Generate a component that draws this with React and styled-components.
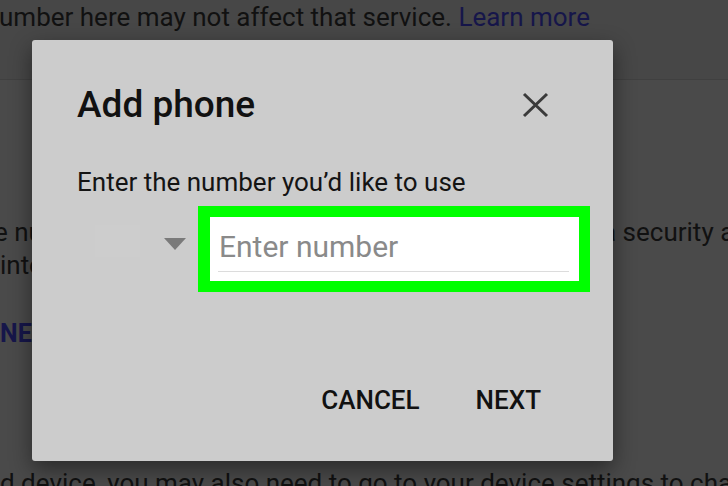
import React from 'react'
import styled, { createGlobalStyle } from 'styled-components'

const GlobalStyle = createGlobalStyle`
  html, body {
    margin: 0;
    padding: 0;
    background: #4a4a4a;
    overflow: hidden;
  }
  body {
    font-family: Roboto, "Liberation Sans", sans-serif;
  }
`;

const Screen = styled.div`
  position: relative;
  width: 728px;
  height: 486px;
  overflow: hidden;
  background: #4a4a4a;
  color: #111;
`;

const TopBand = styled.div`
  height: 80px;
  padding-top: 1px;
  box-sizing: border-box;
  background: #474747;
  border-bottom: 1px solid #404040;
`;

const Line = styled.div`
  font-size: 26px;
  line-height: 33px;
  white-space: nowrap;
  margin-left: ${p => p.$indent || 0}px;
  margin-top: ${p => p.$top || 0}px;
`;

const Link = styled.span`
  color: #16164a;
`;

const BoldLink = styled.div`
  font-size: 25px;
  line-height: 33px;
  font-weight: 700;
  color: #16164a;
  margin-top: 35px;
`;

const Section = styled.div`
  padding-top: 136px;
`;

const SplitLine = styled.div`
  display: grid;
  grid-template-columns: 602px max-content;
  font-size: 26px;
  line-height: 33px;
  white-space: nowrap;
`;

const LeftCell = styled.span`
  overflow: hidden;
  text-indent: -6px;
`;

const RightCell = styled.span``;

const Dialog = styled.div`
  position: absolute;
  left: 32px;
  top: 40px;
  width: 581px;
  height: 421px;
  box-sizing: border-box;
  padding: 45px 0 43px 45px;
  background: #cccccc;
  border-radius: 3px;
  box-shadow: 0 8px 22px rgba(0, 0, 0, 0.45);
  display: flex;
  flex-direction: column;
`;

const Header = styled.div`
  display: flex;
  align-items: center;
  justify-content: space-between;
  padding-right: 64px;
`;

const Title = styled.h2`
  margin: 0;
  font-size: 37px;
  line-height: 40px;
  font-weight: 500;
  color: #111;
`;

const CloseButton = styled.button`
  display: flex;
  padding: 0;
  border: none;
  background: none;
  cursor: pointer;
`;

const Prompt = styled.p`
  margin: 42px 0 0;
  font-size: 26px;
  line-height: 30px;
  color: #141414;
`;

const InputRow = styled.div`
  display: flex;
  margin-top: 9px;
`;

const CountryPicker = styled.div`
  width: 121px;
  display: flex;
  align-items: flex-start;
`;

const CountryFlag = styled.div`
  margin: 19px 0 0 18px;
  width: 45px;
  height: 32px;
  background: #cdcdcd;
`;

const Caret = styled.svg`
  margin: 32px 0 0 24px;
`;

const Highlight = styled.div`
  width: 392px;
  box-sizing: border-box;
  border: solid #00ff00;
  border-width: 11px 11px 11px 12px;
  background: #ffffff;
  height: 86px;
`;

const NumberInput = styled.input`
  display: block;
  box-sizing: border-box;
  width: calc(100% - 18px);
  height: 55px;
  margin: 0 10px 0 8px;
  padding: 5px 1px 0;
  border: none;
  border-bottom: 1px solid #dcdcdc;
  outline: none;
  background: transparent;
  font-family: Roboto, "Liberation Sans", sans-serif;
  font-size: 30px;
  color: #222;

  &::placeholder {
    color: #8a8a8a;
  }
`;

const Actions = styled.div`
  margin-top: auto;
  display: flex;
  justify-content: flex-end;
  gap: 32px;
  padding-right: 60px;
`;

const TextButton = styled.button`
  border: none;
  background: none;
  padding: 0 12px;
  font-family: Roboto, "Liberation Sans", sans-serif;
  font-size: 26px;
  line-height: 36px;
  font-weight: 500;
  color: #111;
  cursor: pointer;
`;

function CloseIcon() {
  return (
    <svg width="27" height="26" viewBox="0 0 27 26">
      <path d="M2 2 L25 24 M25 2 L2 24" stroke="#3a3a3a" strokeWidth="3" fill="none" />
    </svg>
  )
}

export default function App() {
  return (
    <>
      <GlobalStyle />
      <Screen>
        <TopBand>
          <Line $indent={-1}>
            umber here may not affect that service. <Link>Learn more</Link>
          </Line>
        </TopBand>
        <Section>
          <SplitLine>
            <LeftCell>e number you add here can be used as</LeftCell>
            <RightCell>a security a</RightCell>
          </SplitLine>
          <Line>into your account and to send codes</Line>
          <BoldLink>NEXT</BoldLink>
          <Line $top={117}>d device, you may also need to go to your device settings to cha</Line>
        </Section>

        <Dialog>
          <Header>
            <Title>Add phone</Title>
            <CloseButton aria-label="Close">
              <CloseIcon />
            </CloseButton>
          </Header>
          <Prompt>Enter the number you’d like to use</Prompt>
          <InputRow>
            <CountryPicker>
              <CountryFlag />
              <Caret width="22" height="12" viewBox="0 0 22 12">
                <polygon points="0,0 22,0 11,12" fill="#7a7a7a" />
              </Caret>
            </CountryPicker>
            <Highlight>
              <NumberInput placeholder="Enter number" />
            </Highlight>
          </InputRow>
          <Actions>
            <TextButton>CANCEL</TextButton>
            <TextButton>NEXT</TextButton>
          </Actions>
        </Dialog>
      </Screen>
    </>
  )
}
